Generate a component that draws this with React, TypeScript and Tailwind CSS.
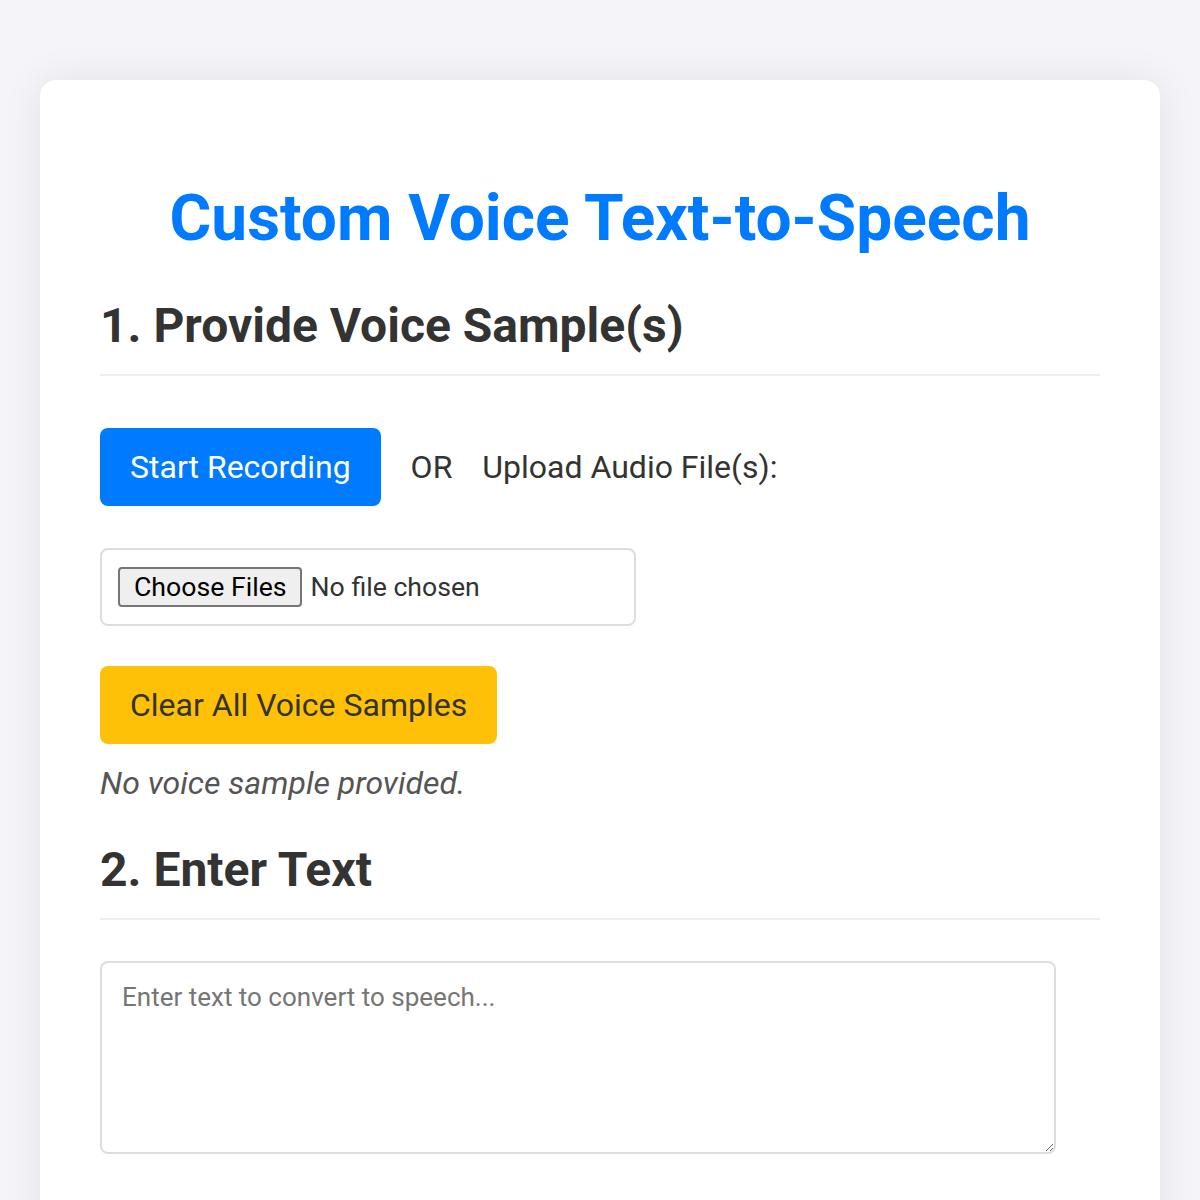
export default function App() {
    return (
        <div className="min-h-screen bg-[#f4f4f9] px-[40px] pt-[80px] font-['Roboto','Liberation_Sans',sans-serif] text-[#333]">
            <div className="bg-white rounded-[16px] px-[60px] pt-[60px] pb-[80px] shadow-[0_0_40px_rgba(0,0,0,0.08)]">
                <h1 className="mt-[41px] text-center text-[64px] leading-[75px] font-bold text-[#007bff]">
                    Custom Voice Text-to-Speech
                </h1>

                <h2 className="mt-[42px] pb-[20px] border-b-2 border-[#eee] text-[48px] leading-[56px] font-bold">
                    1. Provide Voice Sample(s)
                </h2>

                <div className="mt-[52px] flex items-center">
                    <button className="h-[78px] px-[30px] rounded-[8px] bg-[#007bff] text-white text-[32px] leading-[38px]">
                        Start Recording
                    </button>
                    <span className="mx-[30px] text-[32px]">OR</span>
                    <span className="text-[32px]">Upload Audio File(s):</span>
                </div>

                <label className="mt-[42px] flex items-center w-[536px] h-[78px] px-[16px] border-2 border-[#ddd] rounded-[8px] text-[26.67px] cursor-pointer">
                    <input type="file" multiple accept="audio/*" className="hidden" />
                    <span className="h-[40px] pl-[14px] pr-[13px] flex items-center bg-[#efefef] border-2 border-[#767676] rounded-[4px] text-black">
                        Choose Files
                    </span>
                    <span className="ml-[9px]">No file chosen</span>
                </label>

                <button className="mt-[40px] block h-[78px] px-[30px] rounded-[8px] bg-[#ffc107] text-[#333] text-[32px] leading-[38px]">
                    Clear All Voice Samples
                </button>

                <p className="mt-[20px] text-[32px] leading-[38px] italic text-[#555]">No voice sample provided.</p>

                <h2 className="mt-[40px] pb-[20px] border-b-2 border-[#eee] text-[48px] leading-[56px] font-bold">
                    2. Enter Text
                </h2>

                <textarea
                    placeholder="Enter text to convert to speech..."
                    className="mt-[41px] block w-[956px] h-[193px] px-[20px] py-[18px] border-2 border-[#ddd] rounded-[8px] text-[26px] leading-[32px] placeholder:text-[#757575] outline-none"
                />
            </div>
        </div>
    );
}
